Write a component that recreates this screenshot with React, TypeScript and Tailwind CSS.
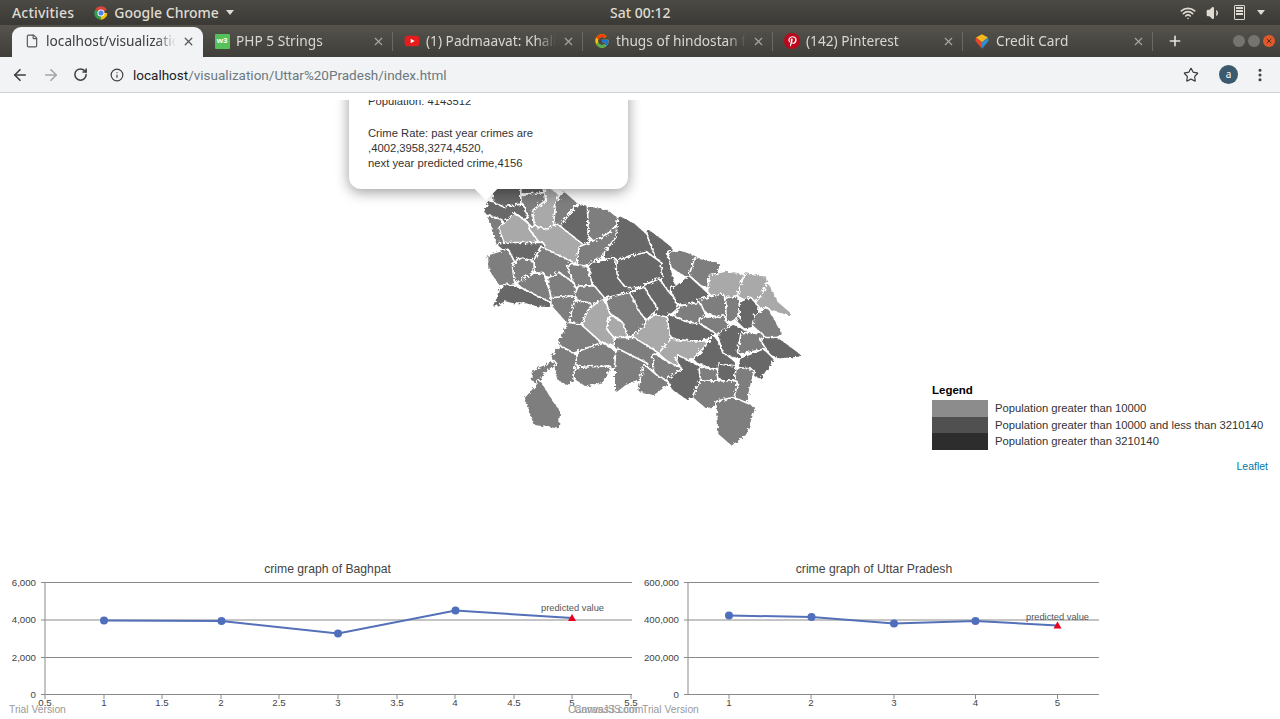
import { ArrowLeft, ArrowRight, RotateCw, Info, Star, File, X, Plus, Wifi, Volume1, MoreVertical } from "lucide-react";
import { FaPinterestP } from "react-icons/fa";
import { FcGoogle } from "react-icons/fc";

const L = "#a9a9a9";
const M = "#7e7e7e";
const D = "#686868";

const districts: [string, string][] = [
  [D, "75,20 160,20 155,70 100,85 75,75"], [D, "160,10 225,10 225,45 160,45"],
  [M, "160,50 225,45 235,60 195,95 190,135 165,110 160,80"], [L, "230,25 258,45 255,130 235,150 200,130 195,95 235,65"],
  [M, "265,70 280,40 320,75 275,140 258,130"], [D, "325,80 355,85 362,155 345,190 280,155 278,140"],
  [M, "360,85 410,95 450,125 420,165 385,185 362,165"], [D, "60,70 75,78 100,88 155,80 165,110 105,125 70,105 48,95"],
  [M, "60,115 90,125 100,160 110,190 85,195 70,140"], [L, "95,145 135,108 170,135 195,180 110,190"],
  [L, "185,145 235,155 260,140 335,200 320,250 230,205"], [D, "90,195 215,195 185,250 150,235 130,255 115,215"],
  [M, "60,230 110,215 130,255 130,305 90,310 60,265"], [M, "135,260 150,240 185,250 195,265 140,300"],
  [M, "215,210 300,250 295,275 310,300 250,290 200,270 200,240"], [M, "335,205 385,185 420,165 440,145 440,175 410,215 360,245 325,255"],
  [D, "450,115 490,135 535,175 560,235 510,225 460,235 410,240 410,220 445,175"], [D, "535,155 570,180 600,205 590,240 610,320 590,330 575,280 565,235"],
  [M, "600,220 640,220 680,235 650,285 610,260"], [M, "680,240 745,255 720,320 695,310 665,285"],
  [L, "725,290 770,280 820,290 810,340 770,355 720,335"], [L, "830,285 885,295 875,345 840,360 810,345"],
  [L, "895,320 920,370 955,400 900,385 860,375 880,350"], [D, "365,255 430,240 455,300 495,325 400,350 370,320"],
  [D, "445,250 480,235 530,225 565,250 570,290 520,315 470,315 450,290"], [D, "530,320 565,305 590,340 625,375 590,405 550,400 530,350"],
  [D, "480,345 520,330 530,350 555,385 530,410 505,385"], [D, "610,330 655,295 710,345 660,375 625,365"],
  [M, "690,365 755,350 775,410 730,400 690,380"], [M, "630,385 685,375 700,405 685,430 620,410"],
  [M, "695,420 770,415 770,460 735,460 695,430"], [D, "805,375 840,360 860,385 850,435 825,440 800,415"],
  [M, "860,410 890,390 905,415 930,460 900,475 855,435"], [M, "775,360 800,355 800,410 775,420"],
  [M, "150,310 175,295 215,285 240,360 190,345"], [D, "110,320 150,330 190,350 240,375 205,375 170,365 130,365 105,358 75,375 90,350 95,330"],
  [M, "240,300 265,285 315,320 320,345 250,350"], [M, "300,260 345,265 360,315 320,315"],
  [M, "330,325 370,325 395,355 370,375 320,350"], [M, "250,360 310,355 310,395 290,420 250,375"],
  [M, "320,370 355,375 345,410 325,430 305,420"], [L, "395,365 425,405 415,450 435,490 390,480 340,440 360,395"],
  [M, "415,360 475,345 500,395 525,430 480,470 455,415 425,395"], [L, "425,415 450,430 465,465 435,465 418,445"],
  [L, "550,410 595,420 595,480 565,510 525,485 490,475 525,445"], [D, "600,410 640,430 690,440 730,465 680,480 620,480 605,460"],
  [L, "605,485 660,490 705,490 670,525 610,550 575,520"], [M, "295,435 330,440 385,490 330,505 300,515 270,490"],
  [M, "270,505 315,530 310,590 295,610 270,600 250,530"], [M, "330,520 395,495 435,520 430,560 380,565 325,550"],
  [M, "320,570 415,565 400,600 350,615 320,595"], [M, "440,480 490,480 555,520 550,565 500,535 440,500"],
  [M, "445,515 525,555 500,600 465,610 440,630 440,570"], [M, "555,530 605,560 635,570 600,595 560,590"],
  [M, "525,565 560,595 590,610 550,640 510,630"], [D, "625,535 690,565 690,625 655,655 610,625 600,600 645,570"],
  [D, "730,475 755,520 790,550 750,570 680,540 715,500"], [D, "750,465 790,440 830,460 810,500 805,530 765,515"],
  [M, "820,465 870,465 885,500 810,515"], [D, "880,480 925,480 985,525 930,530 905,520"],
  [D, "815,540 880,515 905,540 870,590 810,565"], [M, "695,570 740,575 735,600 700,605"],
  [D, "750,560 795,565 800,580 775,605 750,590"], [M, "805,570 845,575 825,660 795,650 800,605"],
  [M, "695,610 795,610 785,650 710,680 675,650"], [M, "745,670 790,660 850,685 825,760 785,790 750,760"],
  [M, "190,575 250,550 215,580 205,605 190,600"], [M, "210,610 240,660 265,695 262,740 195,730 170,655"],
];

function ChromeIcon() {
  return (
    <svg width="16" height="16" viewBox="0 0 24 24">
      <path d="M12 12 3.3 7A10 10 0 0 1 20.7 7Z" fill="#d9453a" />
      <path d="M12 12h9.5A10 10 0 0 1 11 22Z" fill="#f4c20d" />
      <path d="M12 12 11 22A10 10 0 0 1 3.3 7Z" fill="#2f9e4f" />
      <circle cx="12" cy="12" r="4.6" fill="#4a86e8" stroke="#eee" strokeWidth="1.6" />
    </svg>
  );
}

function W3Icon() {
  return (
    <div className="flex h-[15px] w-[15px] items-center justify-center rounded-[1px] bg-[#56c05a] font-['Liberation_Sans',sans-serif] text-[8px] font-bold text-white">
      w3
    </div>
  );
}

function YoutubeIcon() {
  return (
    <svg width="16" height="16" viewBox="0 0 24 24">
      <rect x="1" y="4" width="22" height="16" rx="5" fill="#e81c1c" />
      <path d="M10 8.5v7l6-3.5Z" fill="#fff" />
    </svg>
  );
}

function PinterestIcon() {
  return (
    <div className="flex h-[16px] w-[16px] items-center justify-center rounded-full bg-[#bd081c] text-white">
      <FaPinterestP size={11} />
    </div>
  );
}

function CardIcon() {
  return (
    <svg width="16" height="17" viewBox="0 0 24 24">
      <path d="M12 1 21 6 12 13 3 6Z" fill="#f5b81f" />
      <path d="M3 6 12 13 12 23 2 11Z" fill="#e8452c" />
      <path d="M21 6 22 11 12 23 12 13Z" fill="#2f8fd0" />
    </svg>
  );
}

const tabs = [
  { title: "PHP 5 Strings", icon: <W3Icon /> },
  { title: "(1) Padmaavat: Khalibali", icon: <YoutubeIcon /> },
  { title: "thugs of hindostan full", icon: <FcGoogle size={16} /> },
  { title: "(142) Pinterest", icon: <PinterestIcon /> },
  { title: "Credit Card", icon: <CardIcon /> },
];

function TopBar() {
  return (
    <div className="flex h-[25px] items-center bg-gradient-to-b from-[#4c4a44] to-[#3a3935] pl-[12px] pr-[15px] text-[14px] font-medium text-[#dfdbd2]">
      <div className="flex w-[598px] items-center">
        <span className="tracking-[0.2px]">Activities</span>
        <span className="ml-[19px] flex items-center gap-[5px]">
          <ChromeIcon />
          Google Chrome
          <span className="ml-[2px] h-0 w-0 border-x-[4px] border-t-[5px] border-x-transparent border-t-[#dfdbd2]" />
        </span>
      </div>
      <span>Sat 00:12</span>
      <div className="ml-auto flex items-center gap-[10px]">
        <Wifi size={16} strokeWidth={2.4} />
        <Volume1 size={16} fill="currentColor" />
        <div className="ml-[2px] flex h-[15px] w-[11px] flex-col gap-[1px] rounded-[1px] border border-[#dfdbd2] p-[1px]">
          <div className="h-[2px] bg-[#dfdbd2]" />
          <div className="h-[2px] bg-[#dfdbd2]" />
          <div className="h-[2px] bg-[#dfdbd2]" />
        </div>
        <span className="ml-[2px] h-0 w-0 border-x-[4px] border-t-[5px] border-x-transparent border-t-[#dfdbd2]" />
      </div>
    </div>
  );
}

function TabStrip() {
  return (
    <div className="flex h-[32px] items-end bg-gradient-to-b from-[#55534c] to-[#3f3e39] pl-[12px] text-[13.7px]">
      <div className="relative flex h-[30px] w-[191px] items-center rounded-t-[9px] bg-[#f2f3f4] pb-[2px] pl-[13px] text-[#3c4043]">
        <File size={14} className="shrink-0 text-[#55585c]" />
        <span className="ml-[7px] w-[130px] overflow-hidden whitespace-nowrap [mask-image:linear-gradient(to_right,black_85%,transparent)]">localhost/visualization</span>
        <X size={13} strokeWidth={2.4} className="absolute left-[170px] text-[#55585c]" />
      </div>
      {tabs.map((tab) => (
        <div key={tab.title} className="relative flex h-[30px] w-[190px] items-center pb-[2px] pl-[11px] text-[#d9d7d2]">
          <div className="flex w-[16px] shrink-0 items-center justify-center">{tab.icon}</div>
          <span className="ml-[6px] w-[130px] overflow-hidden whitespace-nowrap [mask-image:linear-gradient(to_right,black_85%,transparent)]">{tab.title}</span>
          <X size={13} strokeWidth={2} className="absolute left-[169px] text-[#a9a8a3]" />
          <div className="absolute right-0 top-[5px] h-[19px] w-[1px] bg-[#6a6963]" />
        </div>
      ))}
      <div className="flex h-[30px] items-center pb-[2px] pl-[14px] text-[#e4e2dc]">
        <Plus size={16} strokeWidth={2.4} />
      </div>
      <div className="ml-[50px] flex h-[30px] items-center gap-[3px] pb-[2px]">
        <div className="h-[12px] w-[12px] rounded-full bg-[#75746e]" />
        <div className="h-[12px] w-[12px] rounded-full bg-[#75746e]" />
        <div className="flex h-[12px] w-[12px] items-center justify-center rounded-full bg-[#e0592a] text-[#5a2a12]">
          <X size={8} strokeWidth={3} />
        </div>
      </div>
    </div>
  );
}

function Toolbar() {
  return (
    <div className="flex h-[36px] items-center border-b border-[#d3d3d3] bg-[#f1f3f4] pl-[11px] pr-[12px] text-[#3c4043]">
      <ArrowLeft size={18} strokeWidth={2.2} />
      <ArrowRight size={18} strokeWidth={2.2} className="ml-[13px] text-[#a3a6a9]" />
      <RotateCw size={15} strokeWidth={2.4} className="ml-[13px]" />
      <Info size={14} className="ml-[22px]" />
      <span className="ml-[9px] pt-[1px] font-['Roboto',sans-serif] text-[13.5px]">
        <span className="text-[#202124]">localhost</span>
        <span className="text-[#6c7882]">/visualization/Uttar%20Pradesh/index.html</span>
      </span>
      <Star size={16} strokeWidth={1.8} className="ml-auto" />
      <div className="ml-[20px] flex h-[19px] w-[19px] items-center justify-center rounded-full bg-[#3c5a6e] text-[10px] text-white">
        a
      </div>
      <MoreVertical size={16} strokeWidth={2.6} className="ml-[14px]" />
    </div>
  );
}

function UpMap() {
  return (
    <svg viewBox="0 0 1020 810" className="absolute left-[470px] top-[80px] h-[270px] w-[340px] overflow-visible">
      <defs>
        <filter id="jag" x="-5%" y="-5%" width="110%" height="110%">
          <feTurbulence type="fractalNoise" baseFrequency="0.11" numOctaves="3" seed="4" />
          <feDisplacementMap in="SourceGraphic" scale="15" />
          <feGaussianBlur stdDeviation="0.9" />
        </filter>
      </defs>
      {/* each district grows into the gaps, its halo gives the white border */}
      <g filter="url(#jag)" strokeLinejoin="round">
        {districts.map(([fill, points]) => (
          <g key={points}>
            <polygon points={points} fill="#ffffff" stroke="#ffffff" strokeWidth="20" />
            <polygon points={points} fill={fill} stroke={fill} strokeWidth="10" />
          </g>
        ))}
      </g>
    </svg>
  );
}

function Popup() {
  return (
    <div className="absolute left-[349px] top-[-19px] w-[279px] rounded-[12px] bg-white pb-[18px] pl-[19px] pt-[13px] font-['Liberation_Sans',sans-serif] text-[11.25px] leading-[15px] text-[#333] shadow-[0_3px_14px_rgba(0,0,0,0.4)]">
      Population: 4143512
      <div className="h-[17px]" />
      Crime Rate: past year crimes are
      <br />
      ,4002,3958,3274,4520,
      <br />
      next year predicted crime,4156
      <div className="absolute bottom-[-8px] left-[129px] h-[16px] w-[16px] rotate-45 bg-white" />
    </div>
  );
}

function Legend() {
  const rows = [
    ["bg-[#8c8c8c]", "Population greater than 10000"],
    ["bg-[#505050]", "Population greater than 10000 and less than 3210140"],
    ["bg-[#2d2d2d]", "Population greater than 3210140"],
  ];
  return (
    <div className="absolute left-[932px] top-[283px] font-['Liberation_Sans',sans-serif] text-[11.25px] text-[#333]">
      <div className="h-[17px] text-[11.5px] font-bold leading-[15px] text-black">Legend</div>
      {rows.map(([swatch, label]) => (
        <div key={label} className="flex h-[16.7px] items-center whitespace-nowrap">
          <div className={`h-full w-[56px] ${swatch}`} />
          <span className="ml-[7px] -translate-y-[0.5px]">{label}</span>
        </div>
      ))}
    </div>
  );
}

type ChartProps = {
  originX: number;
  width: number;
  title: string;
  titleX: number;
  plotLeft: number;
  plotRight: number;
  yTicks: string[];
  xTicks: [number, string][];
  points: [number, number][];
  predicted: [number, number];
  predictedLabelX: number;
  predictedLabelY: number;
  credits: [number, string][];
};

function Chart(p: ChartProps) {
  const gridY = [582.5, 620, 657.5, 694.5];
  const line = [...p.points, p.predicted].map((pt) => pt.join(",")).join(" ");
  const [tx, ty] = p.predicted;
  return (
    <svg
      viewBox={`${p.originX} 555 ${p.width} 164`}
      className="shrink-0 overflow-visible font-['Liberation_Sans',sans-serif]"
      width={p.width}
      height={164}
    >
      <text x={p.titleX} y={573} textAnchor="middle" fontSize="12.2" fill="#444">{p.title}</text>
      {gridY.map((y, i) => (
        <g key={y}>
          <line x1={p.plotLeft - 4} x2={p.plotRight} y1={y} y2={y} stroke="#8a8a8a" />
          <text x={p.plotLeft - 9} y={y + 3} textAnchor="end" fontSize="9.7" fill="#444">{p.yTicks[i]}</text>
        </g>
      ))}
      <line x1={p.plotLeft} x2={p.plotLeft} y1={582} y2={695} stroke="#8a8a8a" />
      {p.xTicks.map(([x, label]) => (
        <g key={label}>
          <line x1={x} x2={x} y1={695} y2={699} stroke="#8a8a8a" />
          <text x={x} y={705.5} textAnchor="middle" fontSize="9.7" fill="#444">{label}</text>
        </g>
      ))}
      <polyline points={line} fill="none" stroke="#5470b8" strokeWidth="2" />
      {p.points.map(([x, y]) => (
        <circle key={x} cx={x} cy={y} r="4" fill="#4f6fbd" />
      ))}
      <polygon points={`${tx},${ty - 4} ${tx + 4},${ty + 3} ${tx - 4},${ty + 3}`} fill="#e8001c" />
      <text x={p.predictedLabelX} y={p.predictedLabelY} textAnchor="middle" fontSize="9.3" fill="#555">{"predicted value"}</text>
      {p.credits.map(([x, text]) => (
        <text key={x} x={x} y={712.5} fontSize="10.3" fill="#999">{text}</text>
      ))}
    </svg>
  );
}

export default function App() {
  return (
    <div className="flex h-[719px] w-[1280px] flex-col overflow-hidden bg-white font-['Noto_Sans',sans-serif]">
      <TopBar />
      <TabStrip />
      <Toolbar />
      <div className="relative mt-[7px] h-[376px] shrink-0 overflow-hidden">
        <UpMap />
        <Popup />
        <Legend />
        <a className="absolute bottom-[1px] right-[12px] font-['Liberation_Sans',sans-serif] text-[10.5px] text-[#0078a8]">Leaflet</a>
      </div>
      <div className="mt-[79px] flex">
        <Chart
          originX={0}
          width={640}
          title="crime graph of Baghpat"
          titleX={327.5}
          plotLeft={45}
          plotRight={632}
          yTicks={["6,000", "4,000", "2,000", "0"]}
          xTicks={[[45, "0.5"], [104, "1"], [162, "1.5"], [221, "2"], [279, "2.5"], [338, "3"], [397, "3.5"], [455, "4"], [514, "4.5"], [572, "5"], [631, "5.5"]]}
          points={[[104, 620.5], [221.5, 621], [338, 633.5], [455.5, 610.5]]}
          predicted={[572, 618]}
          predictedLabelX={572.5}
          predictedLabelY={610.5}
          credits={[[9, "Trial Version"], [568, "CanvasJS.com"]]}
        />
        <Chart
          originX={640}
          width={480}
          title="crime graph of Uttar Pradesh"
          titleX={874}
          plotLeft={688}
          plotRight={1099}
          yTicks={["600,000", "400,000", "200,000", "0"]}
          xTicks={[[729, "1"], [811, "2"], [894, "3"], [975.5, "4"], [1057.5, "5"]]}
          points={[[729, 615.5], [811.5, 617], [894, 623.5], [975.5, 621]]}
          predicted={[1057.5, 625.5]}
          predictedLabelX={1057.5}
          predictedLabelY={619.5}
          credits={[[574, "CanvasJS.com"], [642, "Trial Version"]]}
        />
      </div>
    </div>
  );
}
